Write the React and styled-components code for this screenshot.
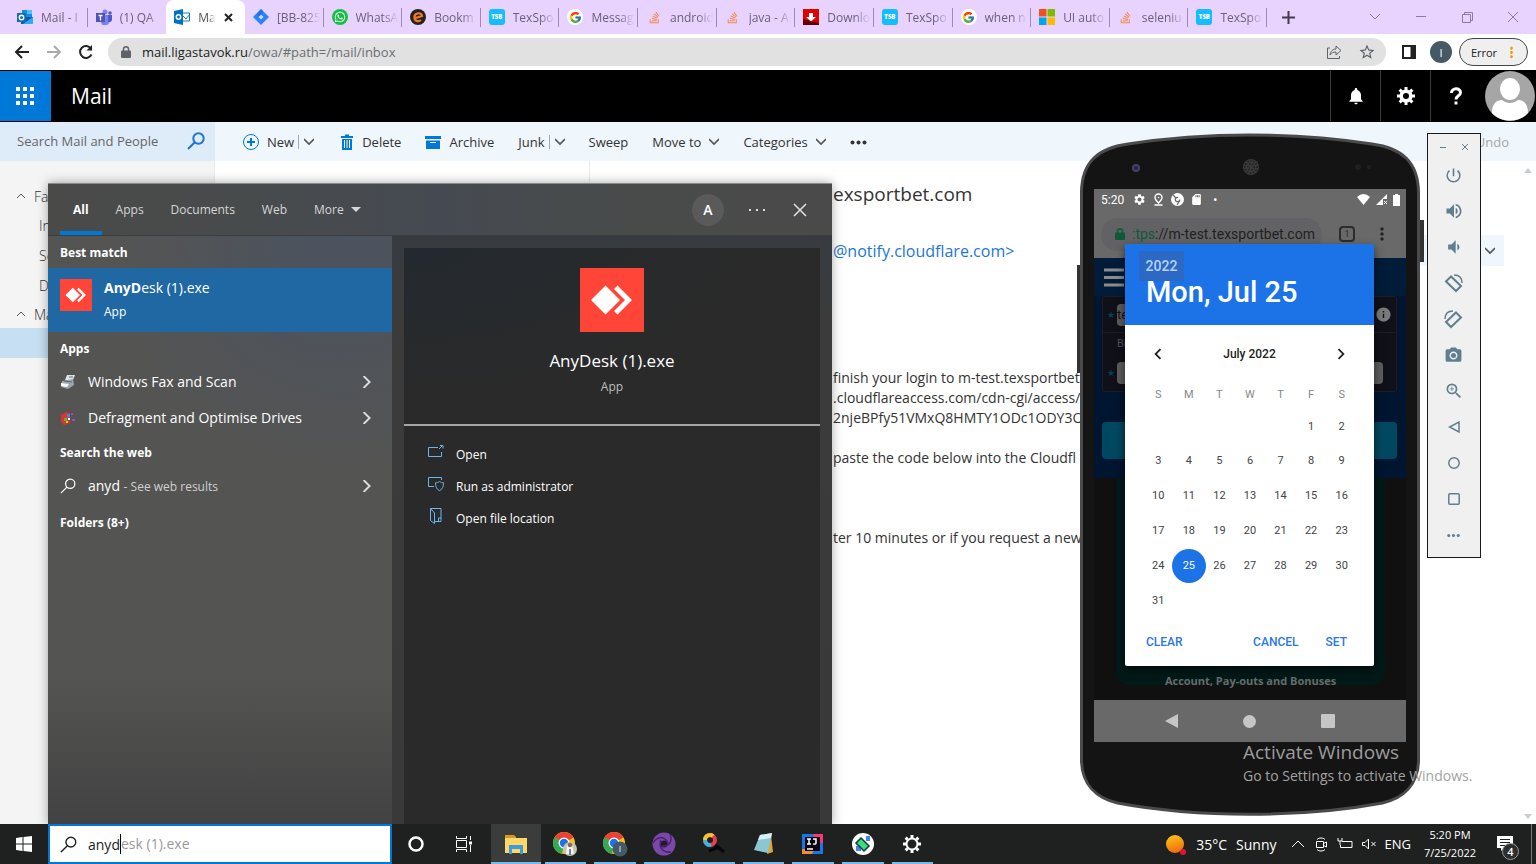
import React from 'react';
import styled, { createGlobalStyle } from 'styled-components';
import { FcGoogle } from 'react-icons/fc';
import { FaWhatsapp, FaStackOverflow } from 'react-icons/fa';
import {
  MdPowerSettingsNew, MdVolumeUp, MdVolumeDown, MdPhotoCamera, MdZoomIn,
  MdSettings, MdMoreVert, MdMoreHoriz, MdNotifications, MdChevronLeft, MdChevronRight,
  MdSdCard, MdStarBorder, MdInfo,
} from 'react-icons/md';

const ui = '"Open Sans", "Noto Sans", sans-serif';
const droid = 'Roboto, "Liberation Sans", sans-serif';

const GlobalStyle = createGlobalStyle`
  * { box-sizing: border-box; }
  body { margin: 0; font-family: ${ui}; font-size: 13px; color: #333; overflow: hidden; }
  button, input { font: inherit; color: inherit; border: 0; padding: 0; margin: 0; background: none; outline: none; }
  button { display: inline-flex; align-items: center; justify-content: center; white-space: nowrap; }
  a { color: inherit; text-decoration: none; }
  svg { display: block; flex: none; }
  h1, h2, h3, p, ul { margin: 0; padding: 0; list-style: none; font-weight: 400; }
`;

const Desktop = styled.div`
  position: relative;
  display: flex;
  flex-direction: column;
  min-height: 100vh;
  background: #fff;
`;

/* ---------- browser chrome ---------- */
const Browser = styled.div`
  flex: 1;
  display: flex;
  flex-direction: column;
`;
const TabStrip = styled.div`
  display: flex;
  height: 34px;
  background: #e8d3ff;
`;
const Tabs = styled.div`
  flex: 1;
  display: flex;
  min-width: 0;
  padding-left: 9px;
`;
const Tab = styled.button`
  flex: 1 1 0;
  min-width: 0;
  gap: 8px;
  justify-content: flex-start;
  padding: 0 2px 0 8px;
  font-size: 12px;
  color: #6b6078;
  position: relative;
  ${p => p.$active && 'background: #fff; border-radius: 8px 8px 0 0; color: #555;'}
  & > svg:last-child { margin-right: 10px; }
  &::after {
    content: '';
    position: absolute;
    right: 0;
    top: 8px;
    width: 1px;
    height: 19px;
    background: ${p => (p.$bare ? 'transparent' : '#9b8bae')};
  }
`;
const TabTitle = styled.span`
  flex: 1;
  min-width: 0;
  text-align: left;
  overflow: hidden;
  mask-image: linear-gradient(90deg, #000 62%, transparent 96%);
`;
const Favicon = styled.span`
  flex: none;
  display: flex;
  align-items: center;
  justify-content: center;
  width: 16px;
  height: 16px;
  border-radius: ${p => p.$r || 0}px;
  background: ${p => p.$bg || 'none'};
  color: #fff;
  font-size: 6px;
  font-weight: 800;
`;
const WindowControls = styled.div`
  flex: 0 0 269px;
  display: flex;
  align-items: center;
  justify-content: space-between;
  padding: 0 17px 0 15px;
  color: #8d7aa3;
`;
const ControlGroup = styled.div`
  display: flex;
  gap: 34px;
`;
const Toolbar = styled.div`
  display: flex;
  align-items: center;
  height: 36px;
  padding: 0 8px 0 14px;
  gap: 16px;
  background: #fff;
`;
const UrlBar = styled.div`
  flex: 1;
  display: flex;
  align-items: center;
  gap: 16px;
  height: 28px;
  margin-left: -2px;
  padding: 0 10px 0 13px;
  border-radius: 14px;
  background: #e1e1e1;
  color: #5f6368;
`;
const UrlText = styled.a`
  flex: 1;
  margin-left: -5px;
  font-size: 13px;
  color: #6b6e72;
  b { font-weight: 400; color: #202124; }
`;
const IconButton = styled.button`
  color: ${p => p.$color || 'inherit'};
`;
const ProfileDot = styled.button`
  width: 22px;
  height: 22px;
  margin: 0 -9px 0 -2px;
  border-radius: 50%;
  background: #455a64;
  color: #fff;
  font-size: 11px;
`;
const ErrorPill = styled.button`
  width: 69px;
  height: 28px;
  gap: 6px;
  padding-left: 4px;
  border: 1px solid #444;
  border-radius: 14px;
  background: #efefef;
  font-size: 11px;
  color: #202124;
  svg { color: #f29900; }
`;

/* ---------- mail ---------- */
const MailHeader = styled.header`
  display: flex;
  align-items: center;
  height: 52px;
  padding: 1px 1px 1px 0;
  background: #000;
  color: #fff;
`;
const Launcher = styled.button`
  width: 51px;
  height: 50px;
  padding-right: 2px;
  background: #0078d7;
`;
const MailTitle = styled.h1`
  flex: 1;
  padding-left: 20px;
  font-size: 21px;
`;
const HeaderButton = styled.button`
  width: 50px;
  height: 50px;
  border-left: 1px solid #3a3a3a;
`;
const CommandBar = styled.div`
  display: flex;
  height: 39px;
  background: #eff6fc;
`;
const MailSearch = styled.label`
  flex: 0 0 215px;
  display: flex;
  align-items: center;
  justify-content: space-between;
  padding: 0 10px 2px 17px;
  background: #deecf9;
  input { width: 150px; font-size: 13px; }
  input::placeholder { color: #666; opacity: 1; }
`;
const Commands = styled.div`
  flex: 1;
  display: flex;
  align-items: center;
  gap: 24px;
  padding: 1px 27px 0 28px;
`;
const Command = styled.button`
  gap: 8px;
  font-size: 13px;
  ${p => p.$end && 'margin-left: auto; color: #a6a6a6;'}
`;
const Split = styled.span`
  display: flex;
  align-items: center;
  gap: 5px;
  margin-left: -4px;
  &::before { content: ''; width: 1px; height: 14px; background: #aaa; }
`;
const MailBody = styled.div`
  flex: 1;
  display: flex;
`;
const Folders = styled.nav`
  flex: 0 0 215px;
  padding-top: 21px;
  background: #f4f4f4;
  border-right: 1px solid #eaeaea;
`;
const Folder = styled.a`
  display: flex;
  align-items: center;
  gap: 8px;
  height: ${p => (p.$group ? 28 : 30)}px;
  padding-left: ${p => (p.$group ? 16 : 39)}px;
  font-size: 14px;
  font-weight: 300;
  background: ${p => (p.$selected ? '#c7dff3' : 'none')};
`;
const MessageList = styled.section`
  flex: 0 0 375px;
  border-right: 1px solid #eaeaea;
`;
const Reading = styled.article`
  flex: 1;
  min-width: 0;
  display: flex;
  justify-content: space-between;
  overflow: hidden;
  padding-left: 243px;
`;
const ReadingText = styled.div`
  flex: 0 0 auto;
  padding-top: 18px;
  white-space: nowrap;
`;
const Subject = styled.h2`
  font-size: 19px;
  line-height: 30px;
`;
const Sender = styled.p`
  padding: 27px 0 102px;
  font-size: 16px;
  line-height: 30px;
  color: #1c78cf;
`;
const Line = styled.p`
  font-size: 14px;
  line-height: 20px;
  min-height: 20px;
`;
const ReadingSide = styled.div`
  display: flex;
  align-items: stretch;
  gap: 16px;
`;
const ReplyMenu = styled.button`
  width: 90px;
  height: 31px;
  margin-top: 74px;
  padding-right: 9px;
  justify-content: flex-end;
  background: #eff6fc;
`;
const ScrollTrack = styled.div`
  width: 16px;
  display: flex;
  flex-direction: column;
  justify-content: space-between;
  align-items: center;
  padding: 7px 0 5px;
`;

/* ---------- windows search ---------- */
const SearchPanel = styled.section`
  position: absolute;
  left: 48px;
  bottom: 40px;
  width: 784px;
  height: 641px;
  display: flex;
  flex-direction: column;
  color: #fff;
  background: #3b3b3b;
  border-top: 1px solid #8a8a8a;
  box-shadow: 0 0 10px rgba(0, 0, 0, 0.35);
`;
const PanelHeader = styled.header`
  display: flex;
  align-items: center;
  justify-content: space-between;
  height: 52px;
  padding: 0 22px 0 12px;
  border-bottom: 1px solid #3c3f41;
  background: linear-gradient(90deg, #4a4a49, #484b4c 25%, #454a52 50%, #484b4b 68%, #4b4a4a);
`;
const Scopes = styled.div`
  display: flex;
  gap: 1px;
`;
const Scope = styled.button`
  height: 51px;
  padding: 4px 13px 0;
  gap: 7px;
  font-size: 12px;
  color: #d6d6d6;
  border-bottom: 4px solid transparent;
  ${p => p.$active && 'color: #fff; font-weight: 700; border-color: #0078d7;'}
`;
const PanelTools = styled.div`
  display: flex;
  align-items: center;
  gap: 25px;
`;
const UserDot = styled.button`
  width: 32px;
  height: 32px;
  border-radius: 50%;
  background: #5a5a5a;
  font-size: 14px;
  font-weight: 600;
`;
const PanelBody = styled.div`
  flex: 1;
  display: flex;
`;
const Results = styled.div`
  flex: 0 0 344px;
  padding-top: 1px;
  background: radial-gradient(circle at 85% 0, #4b5360, transparent 35%), linear-gradient(#545453 75%, #424242);
`;
const GroupTitle = styled.h3`
  height: ${p => p.$h || 32}px;
  padding: 0 12px;
  display: flex;
  align-items: center;
  font-size: 12px;
  font-weight: 700;
`;
const BestMatch = styled.button`
  width: 100%;
  height: 64px;
  padding: 11px 12px;
  gap: 12px;
  align-items: flex-start;
  justify-content: flex-start;
  background: #1f68a3;
`;
const BestText = styled.span`
  display: flex;
  flex-direction: column;
  gap: 7px;
  align-items: flex-start;
  font-size: 14px;
  line-height: 17px;
  small { font-size: 12px; line-height: 17px; }
`;
const Result = styled.button`
  width: 100%;
  height: 36px;
  padding: 0 20px 1px 12px;
  gap: 12px;
  justify-content: flex-start;
  font-size: 14px;
  span { flex: 1; text-align: left; }
  small { font-size: 12px; color: #d0d0d0; }
`;
const Detail = styled.div`
  flex: 1;
  display: flex;
  flex-direction: column;
  padding: 12px 12px 0;
  background: linear-gradient(#373b40, #3b3b3b 15%, #393939);
`;
const Hero = styled.div`
  height: 178px;
  padding-top: 20px;
  display: flex;
  flex-direction: column;
  align-items: center;
  border-bottom: 2px solid #a5a5a5;
  background: radial-gradient(ellipse at 0 0, #23292f, #2a2a2a 60%);
`;
const HeroName = styled.h2`
  padding-top: 17px;
  font-size: 17px;
  line-height: 24px;
`;
const HeroKind = styled.p`
  padding-top: 5px;
  font-size: 12px;
  line-height: 18px;
  color: #bdbdbd;
`;
const Actions = styled.div`
  flex: 1;
  display: flex;
  flex-direction: column;
  padding: 12px 24px;
  background: #2a2a2a;
`;
const Action = styled.button`
  height: 32px;
  gap: 12px;
  justify-content: flex-start;
  font-size: 12px;
  svg { margin-bottom: 4px; }
`;

/* ---------- emulator ---------- */
const Phone = styled.section`
  position: absolute;
  right: 112px;
  top: 132px;
  width: 348px;
  height: 684px;
  padding: 57px 18px 0;
  font-family: ${droid};
`;
const Shell = styled.svg`
  position: absolute;
  left: 0;
  top: 0;
`;
const Screen = styled.div`
  position: relative;
  display: flex;
  flex-direction: column;
  height: 553px;
  background: #101010;
`;
const StatusBar = styled.div`
  display: flex;
  align-items: center;
  gap: 6px;
  height: 21px;
  padding: 0 6px 0 7px;
  background: #696969;
  color: #fff;
  font-size: 12px;
`;
const StatusTime = styled.span`
  flex: none;
  margin-right: 3px;
`;
const StatusDot = styled.span`
  flex: 1;
  margin-left: 4px;
`;
const PhoneUrlRow = styled.div`
  display: flex;
  align-items: center;
  height: 48px;
  padding: 0 14px 0 7px;
  background: #696969;
`;
const PhoneUrl = styled.div`
  flex: 0 0 221px;
  height: 33px;
  padding-left: 14px;
  display: flex;
  align-items: center;
  gap: 7px;
  border-radius: 17px;
  background: #626264;
  font-size: 14px;
  color: #1f1f1f;
  white-space: nowrap;
  i { font-style: normal; color: #0c5a38; }
`;
const TabCount = styled.button`
  flex: none;
  width: 16px;
  height: 16px;
  margin: 0 auto 0 17px;
  border: 2px solid #2c2c2c;
  border-radius: 4px;
  font-size: 9px;
  color: #2c2c2c;
`;
const Site = styled.div`
  height: 220px;
  padding: 10px 9px 0 8px;
  background: linear-gradient(#001c38 38px, #001530 38px);
`;
const SiteForm = styled.div`
  margin-top: 9px;
  border: 1px solid #1d1d26;
  border-radius: 3px;
  background: #101018;
  color: #555;
  font-size: 11px;
`;
const FormRow = styled.div`
  display: flex;
  align-items: center;
  gap: 2px;
  height: 36px;
  padding: 0 4px;
  color: #004258;
  font-size: 9px;
  border-bottom: ${p => (p.$line ? '1px solid #1d1d26' : '0')};
`;
const FormLabel = styled.label`
  display: block;
  height: 22px;
  padding: 4px 14px 0;
`;
const FormInput = styled.input`
  flex: 1;
  min-width: 0;
  height: 22px;
  margin-right: ${p => p.$mr || 0}px;
  border-radius: 4px;
  background: #5d5d5d;
  color: #111;
  font-size: 13px;
`;
const SiteButton = styled.button`
  width: 100%;
  height: 37px;
  margin-top: 30px;
  border-radius: 4px;
  background: #004860;
`;
const Teal = styled.div`
  height: 207px;
  margin: 0 21px 15px 22px;
  display: flex;
  align-items: flex-end;
  justify-content: center;
  border-radius: 0 0 14px 14px;
  background: #001a18;
  color: #6a6a6a;
  font: 700 11px/9px ${ui};
`;
const PhoneNav = styled.div`
  display: flex;
  align-items: center;
  justify-content: space-between;
  height: 42px;
  padding: 0 71px;
  background: #696969;
  color: #c6c6c6;
`;
const Dialog = styled.div`
  position: absolute;
  left: 31px;
  top: 55px;
  width: 249px;
  height: 422px;
  border-radius: 2px;
  background: #fff;
  box-shadow: 0 4px 10px rgba(0, 0, 0, 0.6);
  color: #444;
`;
const DateHeader = styled.div`
  height: 81px;
  padding: 7px 14px;
  background: #1c73e8;
  color: #fff;
`;
const Year = styled.button`
  width: 45px;
  height: 30px;
  background: #2b69c4;
  color: #b9d2f8;
  font-size: 14px;
  font-weight: 500;
`;
const DateTitle = styled.h2`
  padding-left: 7px;
  margin-top: -5px;
  font-size: 29px;
  line-height: 32px;
  font-weight: 500;
`;
const MonthRow = styled.div`
  display: flex;
  align-items: center;
  justify-content: space-between;
  height: 58px;
  padding: 0 22px;
  font-size: 12px;
  font-weight: 500;
  color: #222;
`;
const Calendar = styled.table`
  width: 214px;
  margin: 0 18px;
  border-collapse: collapse;
  table-layout: fixed;
  font-size: 11px;
  th { height: 23px; padding: 0; font-weight: 400; color: #888; }
  tr:first-child td { padding-top: 3px; }
  td { height: 35px; padding: 0; text-align: center; }
`;
const Day = styled.button`
  width: 30px;
  height: 34px;
  ${p => p.$selected && 'width: 34px; margin: 0 -2px; border-radius: 50%; background: #1c73e8; color: #fff;'}
`;
const DialogActions = styled.div`
  display: flex;
  gap: 27px;
  padding: 17px 27px 0 21px;
  font-size: 12px;
  font-weight: 500;
  color: #2a78e8;
  button:first-child { margin-right: auto; }
`;
const EmulatorBar = styled.aside`
  position: absolute;
  right: 55px;
  top: 133px;
  width: 54px;
  height: 425px;
  display: flex;
  flex-direction: column;
  align-items: center;
  padding-right: 1px;
  border: 1px solid #1a1a1a;
  background: #f0f0f0;
  color: #5f7f8e;
`;
const EmulatorTop = styled.div`
  display: flex;
  gap: 14px;
  height: 23px;
  padding-top: 3px;
`;
const EmulatorButton = styled.button`
  height: 36px;
`;
const Watermark = styled.div`
  position: absolute;
  right: 64px;
  bottom: 77px;
  width: 229px;
  white-space: nowrap;
  color: #9c9c9c;
  p:first-child { font-size: 19px; line-height: 26px; }
  p:last-child { font-size: 14px; line-height: 22px; color: #a2a2a2; }
`;

/* ---------- taskbar ---------- */
const Taskbar = styled.footer`
  position: relative;
  display: flex;
  align-items: stretch;
  height: 40px;
  background: #1f2120;
  color: #fff;
`;
const TaskButton = styled.button`
  width: 48px;
`;
const TaskSearch = styled.label`
  display: flex;
  align-items: center;
  width: 344px;
  padding-left: 10px;
  border: 2px solid #0078d7;
  background: #fff;
  color: #222;
  font-size: 14px;
  svg { margin-right: 11px; }
  input { width: 32px; }
  span { border-left: 1px solid #000; color: #999; line-height: 20px; }
`;
const Apps = styled.div`
  flex: 0 0 446px;
  display: flex;
  margin-left: 3px;
`;
const AppButton = styled.button`
  flex: 1;
  position: relative;
  background: ${p => (p.$open ? '#3b3d3c' : 'none')};
  &::after {
    content: '';
    position: absolute;
    left: ${p => (p.$open ? 0 : 4)}px;
    right: ${p => (p.$open ? 0 : 4)}px;
    bottom: 0;
    height: 2px;
    background: #76b9ed;
  }
`;
const Tray = styled.div`
  flex: 1;
  display: flex;
  align-items: center;
  justify-content: flex-end;
  gap: 8px;
  padding-right: 4px;
`;
const Weather = styled.button`
  gap: 9px;
  margin-right: 6px;
  font-size: 14px;
`;
const Clock = styled.button`
  flex-direction: column;
  width: 62px;
  font-size: 11px;
  line-height: 18px;
`;
const Notice = styled.button`
  position: relative;
  width: 34px;
  height: 40px;
  padding-right: 3px;
`;
const Badge = styled.span`
  position: absolute;
  right: 4px;
  bottom: 4px;
  width: 17px;
  height: 17px;
  border: 1px solid #999;
  border-radius: 50%;
  background: #2e2e2e;
  font-size: 11px;
  line-height: 15px;
  font-weight: 600;
`;
const ShowDesktop = styled.button`
  width: 1px;
  height: 40px;
  background: #777;
`;

/* ---------- drawings ---------- */
const Draw = ({ w = 16, h = w, box, sw = 1, children, ...rest }) => (
  <svg width={w} height={h} viewBox={box || `0 0 ${w} ${h}`} fill="none" stroke="currentColor" strokeWidth={sw} aria-hidden="true" {...rest}>{children}</svg>
);
const Chevron = ({ up, right, w = 10, sw = 1.6, color = '#555' }) => (
  <Draw w={w} box="0 0 10 10" sw={sw} color={color}><path d={right ? 'M3 0l5 5-5 5' : up ? 'M1 7l4-4 4 4' : 'M0 2l5 5 5-5'} /></Draw>
);
const Glass = ({ w = 18, sw = 2, color = 'currentColor' }) => (
  <Draw w={w} box="0 0 18 18" sw={sw} color={color}><circle cx="11.5" cy="6.5" r="5.2" /><path d="M7.8 10.2L1 17" /></Draw>
);
const Padlock = ({ color = 'currentColor' }) => (
  <Draw w={10} h={12} sw={1.5} color={color}><path d="M2.500 6V3.300a2.500 2.500 0 015 0V6" /><rect x="0" y="4.500" width="10" height="7.500" rx="1" fill="currentColor" stroke="none" /></Draw>
);
const AnyDesk = ({ w }) => (
  <Draw w={w} box="0 0 64 64" stroke="none">
    <path fill="#ff4438" d="M0 0h64v64H0z" />
    <path fill="#fff" d="M11 32l14.500-14.500L40 32 25.500 46.500zM34 21l3.500-3.500L52 32 37.500 46.500 34 43l11-11z" />
  </Draw>
);
const Outlook = () => (
  <Draw stroke="none"><path fill="#1a8ae0" d="M5 1h10v8H5z" /><path fill="#4cc2f5" d="M10 1h5v4h-5z" /><path fill="#0a5ea8" d="M4 8h12v7H4z" /><path fill="#35a8ee" d="M16 8v7H6z" /><path fill="#0f6cbd" d="M0 4h9v9H0z" /><circle cx="4.500" cy="8.500" r="2.200" stroke="#fff" strokeWidth="1.400" /></Draw>
);
const OutlookOld = () => (
  <Draw stroke="none"><path fill="#fff" stroke="#1a78c8" d="M8 4h7.500v8H8z" /><path stroke="#1a78c8" d="M9 7l3 3 4-5" /><path fill="#0072c6" d="M0 2l9-2v16l-9-2z" /><circle cx="4.500" cy="8" r="2.200" stroke="#fff" strokeWidth="1.500" /></Draw>
);
const Teams = () => (
  <Draw stroke="none"><circle cx="9" cy="3" r="2.500" fill="#7b83eb" /><circle cx="14" cy="4" r="1.800" fill="#5059c9" /><path fill="#7b83eb" d="M5 6h8v6a4 4 0 01-8 1z" /><path fill="#5059c9" d="M12 6h4v5a3 3 0 01-4 2z" /><path fill="#4b53bc" d="M0 4h9v9H0z" /><path stroke="#fff" strokeWidth="1.300" d="M2.500 6.500h4M4.500 6.500v5" /></Draw>
);
const Jira = () => (
  <Draw stroke="none"><path fill="#2684ff" d="M8 0l8 8-8 8-8-8z" /><path fill="#e8d3ff" d="M8 5.500L10.500 8 8 10.500 5.500 8z" /><path fill="#0f5fe0" d="M8 0l2 2-2 3.500L5.500 8 4 5z" opacity=".5" /></Draw>
);
const WhatsApp = () => <Favicon $bg="#12c143" $r={8}><FaWhatsapp size={12} /></Favicon>;
const Bookmate = () => (
  <Draw stroke="none"><circle cx="8" cy="8" r="8" fill="#262222" /><path stroke="#f47a20" strokeWidth="2.200" d="M4 9.500l8-2.500c-.5-4-7-3.500-7.500.5-.5 5 4 5.500 6.500 3.500" /></Draw>
);
const TSB = () => <Favicon $bg="#14bdff" $r={3}>TSB</Favicon>;
const Google = () => <Favicon $bg="#fff" $r={8}><FcGoogle size={13} /></Favicon>;
const Stack = () => <Favicon><FaStackOverflow size={13} color="#f48a4a" /></Favicon>;
const Download = () => (
  <Draw stroke="none"><path fill="#e00000" d="M0 0h16v16H0z" /><path fill="#600" d="M0 10l16 4v2H0z" /><path fill="#fff" d="M6 4h4v4h3l-5 4.500L3 8h3z" /></Draw>
);
const Microsoft = () => (
  <Draw stroke="none"><path fill="#f25022" d="M0 0h7.500v7.500H0z" /><path fill="#7fba00" d="M8.500 0H16v7.500H8.500z" /><path fill="#00a4ef" d="M0 8.500h7.500V16H0z" /><path fill="#ffb900" d="M8.500 8.500H16V16H8.500z" /></Draw>
);
const ChromeMark = ({ children }) => (
  <Draw w={26} stroke="none">
    <circle cx="12" cy="12" r="11" fill="#fbc116" />
    <path fill="#ea4335" d="M12 12L2.500 6.500a11 11 0 0119 0z" />
    <path fill="#34a853" d="M12 12l-2 11A11 11 0 012.500 6.500z" />
    <circle cx="12" cy="12" r="5.500" fill="#fff" /><circle cx="12" cy="12" r="4.200" fill="#1a73e8" />
    {children}
  </Draw>
);

const tabs = [
  [Outlook, 'Mail - I'], [Teams, '(1) QA', 'bare'], [OutlookOld, 'Mai', 'active'], [Jira, '[BB-825'],
  [WhatsApp, 'WhatsA'], [Bookmate, 'Bookm'], [TSB, 'TexSpo'], [Google, 'Messag'], [Stack, 'android'],
  [Stack, 'java - A'], [Download, 'Downlo'], [TSB, 'TexSpo'], [Google, 'when n'], [Microsoft, 'UI auto'],
  [Stack, 'seleniu'], [TSB, 'TexSpo'],
];

const weeks = [
  [null, null, null, null, null, 1, 2],
  ...[3, 10, 17, 24].map(d => [0, 1, 2, 3, 4, 5, 6].map(i => d + i)),
  [31, null, null, null, null, null, null],
];

function BrowserChrome() {
  return (
    <>
      <TabStrip>
        <Tabs>
          {tabs.map(([Icon, title, mode], i) => (
            <Tab key={i} $active={mode === 'active'} $bare={!!mode}>
              <Icon />
              <TabTitle>{title}</TabTitle>
              {mode === 'active' && <Draw w={9} sw={2} color="#222"><path d="M1 1l7 7M8 1L1 8" /></Draw>}
            </Tab>
          ))}
        </Tabs>
        <WindowControls>
          <IconButton aria-label="New tab" $color="#443b4f"><Draw w={13} sw={2}><path d="M6.500 0v13M0 6.500h13" /></Draw></IconButton>
          <ControlGroup>
            <IconButton aria-label="Search tabs"><Draw w={12}><path d="M1 3l5 5 5-5" /></Draw></IconButton>
            <IconButton aria-label="Minimise"><Draw w={12}><path d="M1 5.500h10" /></Draw></IconButton>
            <IconButton aria-label="Restore"><Draw w={12}><path d="M1.500 3.500h8v8h-8zM3.500 3V1.500h8v8H10" /></Draw></IconButton>
            <IconButton aria-label="Close"><Draw w={12}><path d="M1 1l10 10M11 1L1 11" /></Draw></IconButton>
          </ControlGroup>
        </WindowControls>
      </TabStrip>
      <Toolbar>
        <IconButton aria-label="Back" $color="#222"><Draw sw={2}><path d="M15 8H2M8 2L2 8l6 6" /></Draw></IconButton>
        <IconButton aria-label="Forward" $color="#aaa"><Draw sw={2}><path d="M1 8h13M8 2l6 6-6 6" /></Draw></IconButton>
        <IconButton aria-label="Reload" $color="#222"><Draw sw={2}><path d="M13.500 10.500A6 6 0 1113 4.500" /><path d="M14 1v5.500H8.500z" fill="currentColor" stroke="none" /></Draw></IconButton>
        <UrlBar>
          <Padlock />
          <UrlText href="#inbox"><b>mail.ligastavok.ru</b>/owa/#path=/mail/inbox</UrlText>
          <Draw sw={1}><path d="M4 4H1.500v10.500h12V12M4 11c.5-4 3-6 6-6V2l5 4.500-5 4.500V8c-2.500 0-4.500.5-6 3z" /></Draw>
          <MdStarBorder size={18} />
        </UrlBar>
        <IconButton aria-label="Side panel" $color="#222"><Draw w={14}><path d="M1 1h12v12H1z" strokeWidth="2" /><path d="M9 1h4v12H9z" fill="currentColor" /></Draw></IconButton>
        <ProfileDot>I</ProfileDot>
        <ErrorPill>Error<MdMoreVert size={17} /></ErrorPill>
      </Toolbar>
    </>
  );
}

function Mail() {
  return (
    <>
      <MailHeader>
        <Launcher aria-label="App launcher">
          <Draw w={18} stroke="none">{[0, 7, 14].map(y => [0, 7, 14].map(x => <path key={x + '-' + y} fill="#fff" d={`M${x} ${y}h4v4h-4z`} />))}</Draw>
        </Launcher>
        <MailTitle>Mail</MailTitle>
        <HeaderButton aria-label="Notifications"><MdNotifications size={20} /></HeaderButton>
        <HeaderButton aria-label="Settings">
          <Draw w={18} sw={3}><circle cx="9" cy="9" r="4.800" strokeWidth="3.600" /><path d="M9 0v4M9 14v4M0 9h4M14 9h4M2.600 2.600l3 3M12.400 12.400l3 3M2.600 15.400l3-3M12.400 5.600l3-3" /></Draw>
        </HeaderButton>
        <HeaderButton aria-label="Help">
          <Draw w={14} h={18} sw={3}><path d="M2.500 6C2.500.5 11.500.5 11.500 5.500 11.500 9 7 8.500 7 12.500" /><path d="M7 14.500v3" /></Draw>
        </HeaderButton>
        <Draw w={55} h={50} stroke="none">
          <circle cx="30" cy="25" r="25" fill="#a6a6a6" /><ellipse cx="30" cy="18" rx="10" ry="11" fill="#fff" />
          <path fill="#fff" d="M12 42c0-9 4-13 10-13 5 4 11 4 16 0 6 0 10 4 10 13-9 10-27 10-36 0z" />
        </Draw>
      </MailHeader>
      <CommandBar>
        <MailSearch><input aria-label="Search Mail and People" placeholder="Search Mail and People" /><Glass color="#1c78cf" /></MailSearch>
        <Commands>
          <Command><Draw color="#0078d7"><circle cx="8" cy="8" r="7.500" /><path d="M8 4v8M4 8h8" strokeWidth="2" /></Draw>New<Split><Chevron /></Split></Command>
          <Command><Draw w={16} h={16} color="#0078d7"><path d="M3 3h12M7 1.500h4" strokeWidth="2" /><path d="M4 5h10v11H4z" fill="currentColor" stroke="none" /><path stroke="#eff6fc" d="M6.500 6v8M9 6v8M11.500 6v8" /></Draw>Delete</Command>
          <Command><Draw w={16} h={13} color="#0078d7" stroke="none"><path fill="currentColor" d="M0 0h16v3H0zM1 4.500h14V13H1z" /><path fill="#eff6fc" d="M5 6h6v1H5z" /></Draw>Archive</Command>
          <Command>Junk<Split><Chevron /></Split></Command>
          <Command>Sweep</Command>
          <Command>Move to<Chevron /></Command>
          <Command>Categories<Chevron /></Command>
          <Command aria-label="More"><Draw w={17} h={5} stroke="none"><g fill="#333"><circle cx="2.500" cy="2.500" r="2" /><circle cx="8.500" cy="2.500" r="2" /><circle cx="14.500" cy="2.500" r="2" /></g></Draw></Command>
          <Command $end>Undo</Command>
        </Commands>
      </CommandBar>
      <MailBody>
        <Folders>
          <Folder href="#fav" $group><Chevron up sw={1} />Fa</Folder>
          <Folder href="#inbox">In</Folder>
          <Folder href="#sent">Se</Folder>
          <Folder href="#drafts">D</Folder>
          <Folder href="#mailbox" $group><Chevron up sw={1} />Ma</Folder>
          <Folder href="#current" $selected aria-label="Current folder" />
        </Folders>
        <MessageList />
        <Reading>
          <ReadingText>
            <Subject>exsportbet.com</Subject>
            <Sender>@notify.cloudflare.com&gt;</Sender>
            <Line>finish your login to m-test.texsportbet</Line>
            <Line>.cloudflareaccess.com/cdn-cgi/access/</Line>
            <Line>2njeBPfy51VMxQ8HMTY1ODc1ODY3O</Line>
            <Line />
            <Line>paste the code below into the Cloudfl</Line>
            <Line /><Line /><Line />
            <Line>ter 10 minutes or if you request a new</Line>
          </ReadingText>
          <ReadingSide>
            <ReplyMenu aria-label="Reply options"><Chevron /></ReplyMenu>
            <ScrollTrack>
              <Draw w={8} h={5} stroke="none"><path fill="#c8ced4" d="M4 0l4 5H0z" /></Draw>
              <Draw w={8} h={5} stroke="none"><path fill="#c8ced4" d="M0 0h8L4 5z" /></Draw>
            </ScrollTrack>
          </ReadingSide>
        </Reading>
      </MailBody>
    </>
  );
}

function StartSearch() {
  return (
    <SearchPanel>
      <PanelHeader>
        <Scopes>
          <Scope $active>All</Scope>
          <Scope>Apps</Scope>
          <Scope>Documents</Scope>
          <Scope>Web</Scope>
          <Scope>More<Draw w={10} h={5} stroke="none"><path fill="currentColor" d="M0 0h10L5 5z" /></Draw></Scope>
        </Scopes>
        <PanelTools>
          <UserDot>A</UserDot>
          <IconButton aria-label="Options"><Draw w={16} stroke="none"><path fill="#ddd" d="M0 7h2v2H0zM7 7h2v2H7zM14 7h2v2h-2z" /></Draw></IconButton>
          <IconButton aria-label="Close"><Draw w={20} sw={1.6} color="#ddd"><path d="M4 4l12 12M16 4L4 16" /></Draw></IconButton>
        </PanelTools>
      </PanelHeader>
      <PanelBody>
        <Results>
          <GroupTitle $h={31}>Best match</GroupTitle>
          <BestMatch>
            <AnyDesk w={32} />
            <BestText><span><b>AnyD</b>esk (1).exe</span><small>App</small></BestText>
          </BestMatch>
          <GroupTitle>Apps</GroupTitle>
          <Result>
            <Draw stroke="none"><path fill="#dfe4e8" d="M7 1h8l-2 5H5z" /><path fill="#9aa5ad" d="M2 7l11-2 1 6-6 4-7-2z" /><path fill="#fff" d="M1 9l8 1-2 3-6-1z" /><path stroke="#5d6870" d="M4 7l8 1M9 3h4" /></Draw>
            <span>Windows Fax and Scan</span><Chevron right w={12} color="#ddd" />
          </Result>
          <Result>
            <Draw stroke="none"><path fill="#d33" d="M1 5l6-3 3 2v9l-6 2-3-3z" /><path fill="#3c8fe0" d="M7 4h3v3H7z" /><path fill="#40c040" d="M4 8h3v3H4z" /><path fill="#fff" d="M8 8h2v2H8z" /><path fill="#b040d0" d="M11 3h2v2h-2zM12 9h3v2h-3z" /><path fill="#f0c020" d="M6 11h2v2H6z" /></Draw>
            <span>Defragment and Optimise Drives</span><Chevron right w={12} color="#ddd" />
          </Result>
          <GroupTitle>Search the web</GroupTitle>
          <Result><Glass w={16} sw={1.4} /><span>anyd <small>- See web results</small></span><Chevron right w={12} color="#ddd" /></Result>
          <GroupTitle $h={36}>Folders (8+)</GroupTitle>
        </Results>
        <Detail>
          <Hero>
            <AnyDesk w={64} />
            <HeroName>AnyDesk (1).exe</HeroName>
            <HeroKind>App</HeroKind>
          </Hero>
          <Actions>
            <Action><Draw color="#6cb4ee"><path d="M10 3.500H.5v9h13V8M11 5l4-4M12 1.500h3v3" /></Draw>Open</Action>
            <Action><Draw color="#6cb4ee"><path d="M13.500 4V1.500H.5v9H6M11.500 5.500c1.500 1 2.500 1.200 4 1.200 0 4-1 6.500-4 8-3-1.500-4-4-4-8 1.500 0 2.500-.2 4-1.200z" /></Draw>Run as administrator</Action>
            <Action><Draw color="#6cb4ee"><path d="M2.500.5h10.500v13H7M2.500.5v12l4 3V5L2.500.5M10.500 13.500V10H13" /></Draw>Open file location</Action>
          </Actions>
        </Detail>
      </PanelBody>
    </SearchPanel>
  );
}

function Emulator() {
  return (
    <>
      <Phone>
        <Shell width="348" height="684" viewBox="0 0 348 684" aria-hidden="true">
          <path fill="#333" d="M1 133h5v108H1zM342 88h6v42h-6z" />
          <path fill="#141414" stroke="#4a4a4c" strokeWidth="3" d="M5.500 60C6 30 22 16 52 12 130 0 218 0 296 12c30 4 46 18 46.500 48v570c-1 22-14 36-36 41-80 15-185 15-265 0-22-5-35-19-36-41z" />
          <circle cx="60" cy="36" r="4" fill="#445" /><circle cx="60" cy="36" r="2" fill="#227" />
          <circle cx="175" cy="35" r="8" fill="#383838" /><circle cx="175" cy="35" r="6" fill="none" stroke="#1a1a1a" strokeWidth="1.500" strokeDasharray="1 2" /><circle cx="175" cy="35" r="3" fill="none" stroke="#1a1a1a" strokeWidth="1.500" strokeDasharray="1 2" />
          <circle cx="282" cy="35" r="3" fill="#202020" /><circle cx="293" cy="35" r="2" fill="#202020" />
        </Shell>
        <Screen>
          <StatusBar>
            <StatusTime>5:20</StatusTime>
            <MdSettings size={13} />
            <Draw w={13} sw={1.4}><path d="M6.500 10C4 7.500 3 6 3 4.500a3.500 3.500 0 017 0C10 6 9 7.500 6.500 10zM2.500 12h8" /><circle cx="6.500" cy="4.500" r=".8" fill="#fff" stroke="none" /></Draw>
            <Draw w={13} stroke="none"><circle cx="6.500" cy="6.500" r="6.500" fill="#fff" /><circle cx="6.500" cy="6.500" r="2.200" stroke="#696969" strokeWidth="1.300" strokeDasharray="10 4" /><path stroke="#696969" strokeWidth="1.200" d="M2 2l3 3M8.500 8L6 12" /></Draw>
            <MdSdCard size={13} />
            <StatusDot>•</StatusDot>
            <Draw w={13} h={11} stroke="none"><path fill="#fff" d="M0 3Q6.500-3 13 3L6.500 11z" /></Draw>
            <Draw w={11} stroke="none"><path fill="#fff" d="M11 0v5H7v6H0z" /><path stroke="#fff" d="M8 7l3 3M11 7l-3 3" /></Draw>
            <Draw w={7} h={12} stroke="none"><path fill="#fff" d="M0 1h2V0h3v1h2v11H0z" /></Draw>
          </StatusBar>
          <PhoneUrlRow>
            <PhoneUrl><Padlock color="#0c5a38" /><span><i>:tps</i>://m-test.texsportbet.com</span></PhoneUrl>
            <TabCount>1</TabCount>
            <MdMoreVert size={20} color="#222" />
          </PhoneUrlRow>
          <Site>
            <Draw w={22} h={19} sw={3} color="#8c8c8c"><path d="M2 2h20M2 9.500h20M2 17h20" /></Draw>
            <SiteForm>
              <FormRow $line>★<FormInput aria-label="Name" defaultValue="te" $mr={4} /><MdInfo size={17} color="#7a7a7a" /></FormRow>
              <FormLabel htmlFor="birth">Bi</FormLabel>
              <FormRow>★<FormInput id="birth" $mr={9} /></FormRow>
            </SiteForm>
            <SiteButton aria-label="Submit" />
          </Site>
          <Teal>Account, Pay-outs and Bonuses</Teal>
          <PhoneNav>
            <Draw w={13} h={14} stroke="none"><path fill="currentColor" d="M13 0v14L0 7z" /></Draw>
            <Draw w={13} stroke="none"><circle cx="6.500" cy="6.500" r="6.500" fill="currentColor" /></Draw>
            <Draw w={14} stroke="none"><rect width="14" height="14" rx="1" fill="currentColor" /></Draw>
          </PhoneNav>
          <Dialog role="dialog" aria-label="Choose a date">
            <DateHeader><Year>2022</Year><DateTitle>Mon, Jul 25</DateTitle></DateHeader>
            <MonthRow>
              <IconButton aria-label="Previous month"><MdChevronLeft size={22} /></IconButton>
              July 2022
              <IconButton aria-label="Next month"><MdChevronRight size={22} /></IconButton>
            </MonthRow>
            <Calendar>
              <thead><tr>{[...'SMTWTFS'].map((d, i) => <th key={i}>{d}</th>)}</tr></thead>
              <tbody>
                {weeks.map((week, w) => (
                  <tr key={w}>{week.map((d, i) => <td key={i}>{d && <Day $selected={d === 25}>{d}</Day>}</td>)}</tr>
                ))}
              </tbody>
            </Calendar>
            <DialogActions><button>CLEAR</button><button>CANCEL</button><button>SET</button></DialogActions>
          </Dialog>
        </Screen>
      </Phone>
      <EmulatorBar>
        <EmulatorTop>
          <IconButton aria-label="Minimise"><Draw w={8}><path d="M1 4.500h6" /></Draw></IconButton>
          <IconButton aria-label="Close"><Draw w={8}><path d="M1 1l6 6M7 1L1 7" /></Draw></IconButton>
        </EmulatorTop>
        <EmulatorButton aria-label="Power"><MdPowerSettingsNew size={19} /></EmulatorButton>
        <EmulatorButton aria-label="Volume up"><MdVolumeUp size={20} /></EmulatorButton>
        <EmulatorButton aria-label="Volume down"><MdVolumeDown size={20} /></EmulatorButton>
        <EmulatorButton aria-label="Rotate left"><Draw w={19} sw={2}><path d="M7 2.500L2 7.500 12 17l5-5z" /><path strokeWidth="1.500" d="M10 1c5 0 8 3 8 8" /></Draw></EmulatorButton>
        <EmulatorButton aria-label="Rotate right"><Draw w={19} sw={2}><path d="M12 2.500l5 5L7 17l-5-5z" /><path strokeWidth="1.500" d="M9 1C4 1 1 4 1 9" /></Draw></EmulatorButton>
        <EmulatorButton aria-label="Screenshot"><MdPhotoCamera size={19} /></EmulatorButton>
        <EmulatorButton aria-label="Zoom"><MdZoomIn size={20} /></EmulatorButton>
        <EmulatorButton aria-label="Back"><Draw w={12} sw={1.5}><path d="M11 1v10L1.500 6z" /></Draw></EmulatorButton>
        <EmulatorButton aria-label="Home"><Draw w={12} sw={1.5}><circle cx="6" cy="6" r="5.200" /></Draw></EmulatorButton>
        <EmulatorButton aria-label="Overview"><Draw w={12} sw={1.5}><rect x=".8" y=".8" width="10.400" height="10.400" rx="1" /></Draw></EmulatorButton>
        <EmulatorButton aria-label="More"><MdMoreHoriz size={19} /></EmulatorButton>
      </EmulatorBar>
      <Watermark><p>Activate Windows</p><p>Go to Settings to activate Windows.</p></Watermark>
    </>
  );
}

function WindowsTaskbar() {
  return (
    <Taskbar>
      <TaskButton aria-label="Start"><Draw stroke="none" fill="#fff"><path d="M0 2l6.500-1v6.500H0zM7.500.9L16 0v7.500H7.500zM0 8.500h6.500V15L0 14zM7.500 8.500H16V16l-8.500-1z" /></Draw></TaskButton>
      <TaskSearch><Glass w={17} sw={1.5} /><input aria-label="Search Windows" defaultValue="anyd" /><span>esk (1).exe</span></TaskSearch>
      <TaskButton aria-label="Cortana"><Draw sw={2.5}><circle cx="8" cy="8" r="6.500" /></Draw></TaskButton>
      <TaskButton aria-label="Task view"><Draw><path d="M.5 0v2.500h10V0M.5 4.500h10v7H.5zM.5 16v-2.500h10V16M14.500 0v4M14.500 9v7" /><path d="M13 5.500h3v3h-3z" fill="#fff" stroke="none" /></Draw></TaskButton>
      <Apps>
        <AppButton $open aria-label="File Explorer"><Draw w={22} h={19} stroke="none"><path fill="#d89a1c" d="M0 0h9l2 2v4H0z" /><path fill="#ffd668" d="M0 3h22v15H0z" /><path fill="#3d9be0" d="M4 10h14v9h-3v-5H7v5H4z" /></Draw></AppButton>
        <AppButton aria-label="Chrome, first profile"><ChromeMark><circle cx="18" cy="18" r="7" fill="#c9c3b5" /><path fill="#f5f5f2" d="M15 14h5l2 9h-8z" /><circle cx="18" cy="14" r="2.300" fill="#8a6a50" /><path fill="#5b87a8" d="M17 18h2v6h-2z" /></ChromeMark></AppButton>
        <AppButton aria-label="Chrome, second profile"><ChromeMark><circle cx="18" cy="18" r="7.500" fill="#455a64" /><path stroke="#dde" d="M18 15v6" /></ChromeMark></AppButton>
        <AppButton aria-label="Appium"><Draw w={24} stroke="none"><circle cx="12" cy="12" r="11.500" fill="#7a48a8" /><circle cx="12" cy="12" r="3.500" fill="#221a28" /><path stroke="#4b2370" strokeWidth="1.500" d="M1 11C5 4 13 4 16 11M18 2c3 7-1 13-8 12M19 20C11 21 6 15 9 8" /></Draw></AppButton>
        <AppButton aria-label="Inspector"><Draw w={24} stroke="none"><path stroke="#080808" strokeWidth="3" d="M12 12l10 8M7 19l10-4" /><circle cx="8" cy="8" r="5" stroke="#e83e50" strokeWidth="4" /><path stroke="#f5c430" strokeWidth="4" d="M3 8a5 5 0 018-4" /><path stroke="#3bb6dd" strokeWidth="4" d="M3 8a5 5 0 006 5" /></Draw></AppButton>
        <AppButton aria-label="Notepad"><Draw w={24} stroke="none"><path fill="#dba63a" d="M19 3l2 17-6 2z" /><path fill="#8bc6d2" d="M8 3l12-2-4 20-14-3z" /><path fill="#d8eff3" d="M8 3l12-2-1 5-13 2z" /></Draw></AppButton>
        <AppButton aria-label="IntelliJ IDEA"><Draw w={22} stroke="none"><path fill="#1677e8" d="M0 1h21v20H0z" /><path fill="#f23a78" d="M11 1h10v9l-8 1z" /><path fill="#f58a30" d="M0 16l12 1-2 4H0z" /><path fill="#0a0410" d="M3 4h15v14H3z" /><path stroke="#fff" strokeWidth="1.500" d="M5 6h4M7 6v5M5 11h4M11 6h3v4q0 1.500-3 1M5 16h6" /></Draw></AppButton>
        <AppButton aria-label="Android emulator"><Draw w={24} stroke="none"><circle cx="12" cy="12" r="11" fill="#fff" /><path fill="#4285f4" d="M5 14h5v5H5zM15 4h4v5h-4z" /><path fill="#3ddc84" stroke="#0a3d34" strokeWidth="1.500" d="M10 6l8 8-5 5-8-8z" /></Draw></AppButton>
        <AppButton aria-label="Settings"><Draw w={18} sw={3}><circle cx="9" cy="9" r="5.500" strokeWidth="2" /><path d="M9 0v3M9 15v3M0 9h3M15 9h3M2.600 2.600l2 2M13.400 13.400l2 2M2.600 15.400l2-2M13.400 4.600l2-2" /></Draw></AppButton>
      </Apps>
      <Tray>
        <Weather>
          <Draw w={22} stroke="none"><defs><linearGradient id="sun" x2=".3" y2="1"><stop stopColor="#ffc91a" /><stop offset="1" stopColor="#f07010" /></linearGradient></defs><circle cx="10" cy="11" r="9" fill="url(#sun)" /><circle cx="18" cy="19" r="3" fill="#e2123c" /></Draw>
          <span>35°C</span><span>Sunny</span>
        </Weather>
        <IconButton aria-label="Hidden icons"><Draw w={14}><path d="M1 10l6-6 6 6" /></Draw></IconButton>
        <IconButton aria-label="Meet now"><Draw><path d="M3.500 5.500h7v6h-7zM10.500 7.500l3-1.500v5l-3-1.500M4 3.500c2-2 6-2 8 0M4 13.500c2 2 6 2 8 0" /></Draw></IconButton>
        <IconButton aria-label="Power"><Draw><path d="M5 5.500h10v6H3.500V9M1 2v3h4V2M3 5v4" /></Draw></IconButton>
        <IconButton aria-label="Muted"><Draw><path d="M1.500 6.500H4L7.500 3v10L4 9.500H1.500zM10.500 6l4 4M14.500 6l-4 4" /></Draw></IconButton>
        <IconButton aria-label="Language">ENG</IconButton>
        <Clock><span>5:20 PM</span><span>7/25/2022</span></Clock>
        <Notice aria-label="4 notifications"><Draw w={18} stroke="none"><path fill="#fff" d="M1 1h16v12H8l-3 3v-3H1z" /><path stroke="#1f2120" d="M4 4.500h10M4 7.500h10M4 10.500h6" /></Draw><Badge>4</Badge></Notice>
        <ShowDesktop aria-label="Show desktop" />
      </Tray>
    </Taskbar>
  );
}

export default function App() {
  return (
    <>
      <GlobalStyle />
      <Desktop>
        <Browser>
          <BrowserChrome />
          <Mail />
        </Browser>
        <StartSearch />
        <Emulator />
        <WindowsTaskbar />
      </Desktop>
    </>
  );
}
